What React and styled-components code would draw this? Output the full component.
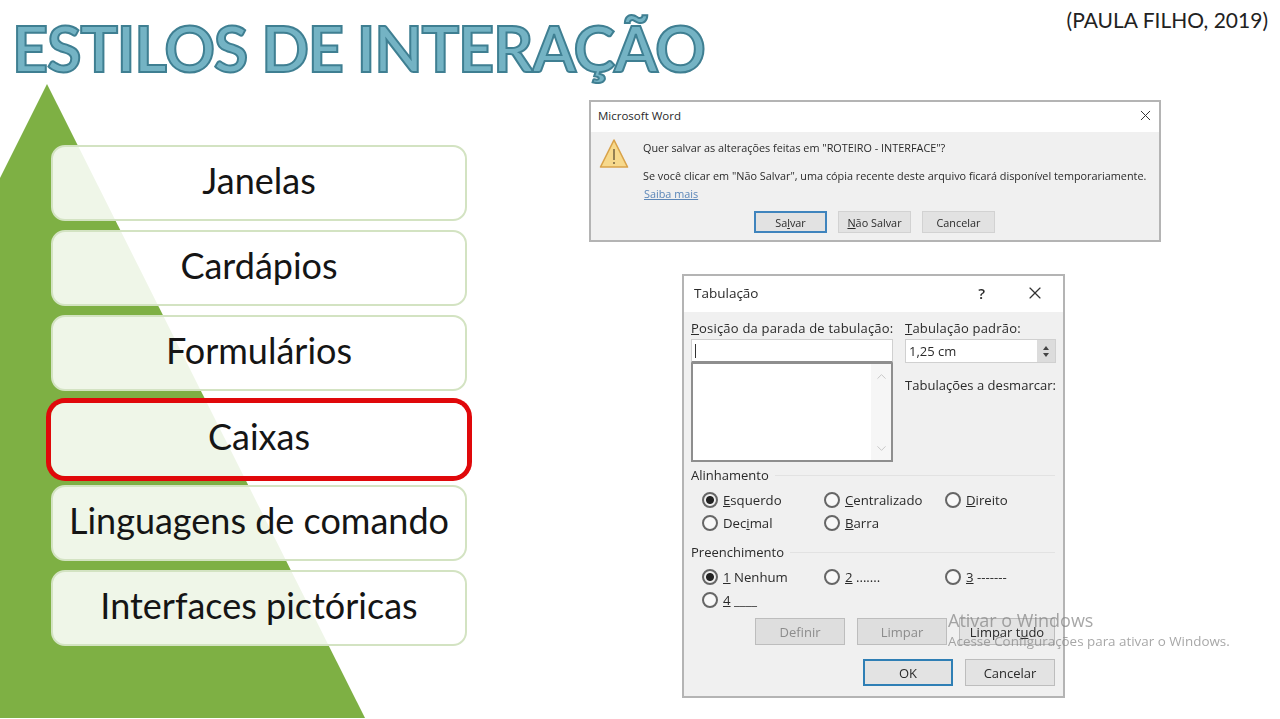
import React from 'react'
import styled, { createGlobalStyle } from 'styled-components'
import { X, ChevronUp, ChevronDown } from 'lucide-react'

const Global = createGlobalStyle`
    body {
        margin: 0;
        background: white;
        font-family: "Lato", "Liberation Sans", sans-serif;
    }
`

const topics = ['Janelas', 'Cardápios', 'Formulários', 'Caixas', 'Linguagens de comando', 'Interfaces pictóricas']

function Radio({ checked, children }) {
    return (
        <RadioItem>
            <RadioDot checked={checked} />
            <span>{children}</span>
        </RadioItem>
    )
}

function Warning() {
    return (
        <svg width="30" height="32" viewBox="0 0 30 32">
            <path d="M15 2 L28.5 29 L1.5 29 Z" fill="#f7d98c" stroke="#d9a24a" strokeWidth="1.6" strokeLinejoin="round" />
            <path d="M15 11 V22" stroke="#7b6a45" strokeWidth="1.6" />
            <path d="M15 24 V26" stroke="#7b6a45" strokeWidth="1.6" />
        </svg>
    )
}

function WordDialog() {
    return (
        <SaveDialog>
            <TitleBar>
                <SaveTitle>Microsoft Word</SaveTitle>
                <X size={17} strokeWidth={1.4} color="#333" />
            </TitleBar>
            <SaveBody>
                <WarningSlot><Warning /></WarningSlot>
                <SaveText>
                    <SaveLine>Quer salvar as alterações feitas em "ROTEIRO - INTERFACE"?</SaveLine>
                    <SaveLine spaced>Se você clicar em "Não Salvar", uma cópia recente deste arquivo ficará disponível temporariamente.</SaveLine>
                    <MoreLink>Saiba mais</MoreLink>
                </SaveText>
            </SaveBody>
            <SaveButtons>
                <SaveButton primary>Sa<u>l</u>var</SaveButton>
                <SaveButton><u>N</u>ão Salvar</SaveButton>
                <SaveButton>Cancelar</SaveButton>
            </SaveButtons>
        </SaveDialog>
    )
}

function TabsDialog() {
    return (
        <TabDialog>
            <TabTitleBar>
                <TabTitle>Tabulação</TabTitle>
                <HelpMark>?</HelpMark>
                <X size={20} strokeWidth={1.4} color="#333" />
            </TabTitleBar>
            <TabBody>
                <TopGrid>
                    <div>
                        <FieldLabel><u>P</u>osição da parada de tabulação:</FieldLabel>
                        <TabInput><Caret /></TabInput>
                        <TabList>
                            <ScrollTrack>
                                <ChevronUp size={15} strokeWidth={1.5} color="#c4c4c4" />
                                <ChevronDown size={15} strokeWidth={1.5} color="#c4c4c4" />
                            </ScrollTrack>
                        </TabList>
                    </div>
                    <div>
                        <FieldLabel><u>T</u>abulação padrão:</FieldLabel>
                        <Spinner>
                            <SpinnerValue>1,25 cm</SpinnerValue>
                            <SpinnerArrows>
                                <ArrowUp />
                                <ArrowDown />
                            </SpinnerArrows>
                        </Spinner>
                        <ClearLabel>Tabulações a desmarcar:</ClearLabel>
                    </div>
                </TopGrid>
                <GroupHead><span>Alinhamento</span><GroupLine /></GroupHead>
                <RadioGrid>
                    <Radio checked><u>E</u>squerdo</Radio>
                    <Radio><u>C</u>entralizado</Radio>
                    <Radio><u>D</u>ireito</Radio>
                    <Radio>Dec<u>i</u>mal</Radio>
                    <Radio><u>B</u>arra</Radio>
                </RadioGrid>
                <GroupHead second><span>Preenchimento</span><GroupLine /></GroupHead>
                <RadioGrid>
                    <Radio checked><u>1</u> Nenhum</Radio>
                    <Radio><u>2</u> .......</Radio>
                    <Radio><u>3</u> -------</Radio>
                    <Radio><u>4</u> ____</Radio>
                </RadioGrid>
                <ActionRow>
                    <TabButton disabled>Definir</TabButton>
                    <TabButton disabled>Limpar</TabButton>
                    <TabButton wide>Limpar t<u>u</u>do</TabButton>
                </ActionRow>
                <ConfirmRow>
                    <TabButton primary>OK</TabButton>
                    <TabButton>Cancelar</TabButton>
                </ConfirmRow>
            </TabBody>
        </TabDialog>
    )
}

function App() {
    return (
        <Slide>
            <Global />
            <Pyramid viewBox="0 0 366 634" width="366" height="634">
                <path d="M47 0 L365 634 L0 634 L0 94 Z" fill="#7eb044" />
            </Pyramid>
            <Header>
                <Title>ESTILOS DE INTERAÇÃO</Title>
                <Citation>(PAULA FILHO, 2019)</Citation>
            </Header>
            <Main>
                <TopicColumn>
                    {topics.map((topic) => (
                        <Topic key={topic} active={topic === 'Caixas'}>{topic}</Topic>
                    ))}
                </TopicColumn>
                <DialogColumn>
                    <WordDialog />
                    <TabsDialog />
                </DialogColumn>
            </Main>
            <Watermark>
                <WatermarkTitle>Ativar o Windows</WatermarkTitle>
                <WatermarkText>Acesse Configurações para ativar o Windows.</WatermarkText>
            </Watermark>
        </Slide>
    )
}

export default App

const Slide = styled.div`
    position: relative;
    width: 1280px;
    height: 719px;
    overflow: hidden;
    background: white;
`
const Pyramid = styled.svg`
    position: absolute;
    left: 0;
    top: 84px;
`
const Header = styled.header`
    position: relative;
    height: 84px;
    display: flex;
    justify-content: space-between;
    align-items: flex-start;
    padding: 0 12px 0 12px;
`
const Title = styled.h1`
    margin: 6px 0 0;
    font-family: "Lato", sans-serif;
    font-weight: 700;
    font-size: 63px;
    line-height: 84px;
    letter-spacing: -1.25px;
    color: #74b3c4;
    -webkit-text-stroke: 2px #3f7f92;
    filter: blur(0.4px);
    white-space: nowrap;
`
const Citation = styled.div`
    margin-top: 7px;
    font-size: 21px;
    line-height: 26px;
    color: #222;
`
const Main = styled.main`
    position: relative;
    display: flex;
    align-items: flex-start;
`
const TopicColumn = styled.div`
    width: 416px;
    margin: 61px 0 0 51px;
    display: flex;
    flex-direction: column;
    gap: 9px;
`
const Topic = styled.div`
    position: relative;
    box-sizing: border-box;
    height: 76px;
    padding-bottom: 7px;
    display: flex;
    align-items: center;
    justify-content: center;
    font-size: 36px;
    color: #151515;
    white-space: nowrap;
    background: rgba(255, 255, 255, 0.88);
    border: 2px solid #d3e3c2;
    border-radius: 14px;
    ${(props) => props.active && `
        height: 73px;
        margin-top: 3px;
        padding-bottom: 7px;
        border-color: transparent;
        box-shadow: 0 0 0 5px #e0080a;
    `}
`
const DialogColumn = styled.div`
    margin: 16px 0 0 122px;
    display: flex;
    flex-direction: column;
    align-items: flex-start;
    font-family: "Open Sans", "Liberation Sans", sans-serif;
    color: #2a2a2a;
    filter: blur(0.45px);
`
const SaveDialog = styled.section`
    box-sizing: border-box;
    width: 572px;
    height: 142px;
    border: 2px solid #b4b4b4;
    background: #f0f0f0;
    display: flex;
    flex-direction: column;
`
const TitleBar = styled.div`
    box-sizing: border-box;
    height: 30px;
    flex: none;
    background: white;
    display: flex;
    align-items: center;
    justify-content: space-between;
    padding: 0 5px 3px 7px;
`
const SaveTitle = styled.span`
    font-size: 11.5px;
`
const SaveBody = styled.div`
    display: flex;
    padding: 6px 0 0 8px;
`
const WarningSlot = styled.div`
    width: 44px;
    height: 32px;
    flex: none;
`
const SaveText = styled.div`
    display: flex;
    flex-direction: column;
    padding-top: 3px;
`
const SaveLine = styled.div`
    font-size: 10.85px;
    line-height: 14px;
    white-space: nowrap;
    margin-top: ${(props) => (props.spaced ? '14px' : '0')};
`
const MoreLink = styled.a`
    margin: 3px 0 0 1px;
    font-size: 10.85px;
    line-height: 16px;
    color: #5b86b8;
    text-decoration: underline;
`
const SaveButtons = styled.div`
    margin: 9px 0 0 163px;
    display: flex;
    gap: 11px;
`
const SaveButton = styled.button`
    box-sizing: border-box;
    width: 73px;
    height: 22px;
    padding: 0;
    font-family: inherit;
    font-size: 10.85px;
    color: #2a2a2a;
    background: #e2e2e2;
    border: ${(props) => (props.primary ? '2px solid #3f84bd' : '1px solid #d2d2d2')};
`
const TabDialog = styled.section`
    box-sizing: border-box;
    width: 383px;
    height: 424px;
    margin: 32px 0 0 93px;
    border: 2px solid #b4b4b4;
    background: #f0f0f0;
`
const TabTitleBar = styled.div`
    box-sizing: border-box;
    height: 36px;
    background: white;
    display: flex;
    align-items: center;
    padding: 0 18px 3px 10px;
`
const TabTitle = styled.span`
    flex: 1;
    font-size: 13.5px;
`
const HelpMark = styled.span`
    margin-right: 40px;
    font-size: 15px;
    font-weight: 600;
`
const TabBody = styled.div`
    padding: 8px 8px 0 7px;
`
const TopGrid = styled.div`
    display: grid;
    grid-template-columns: 202px 1fr;
    column-gap: 12px;
    font-size: 13px;
`
const FieldLabel = styled.div`
    line-height: 16px;
    height: 19px;
    letter-spacing: 0.2px;
    white-space: nowrap;
`
const TabInput = styled.div`
    box-sizing: border-box;
    height: 24px;
    background: white;
    border: 1px solid #d0d0d0;
    border-bottom: 2px solid #8e8e8e;
    padding: 4px 3px;
`
const Caret = styled.div`
    width: 1px;
    height: 14px;
    background: #333;
`
const TabList = styled.div`
    box-sizing: border-box;
    height: 99px;
    background: white;
    border: 2px solid #8e8e8e;
    border-top-width: 1px;
    display: flex;
    justify-content: flex-end;
`
const ScrollTrack = styled.div`
    width: 20px;
    padding: 5px 0 4px;
    background: #f6f6f6;
    display: flex;
    flex-direction: column;
    justify-content: space-between;
    align-items: center;
`
const Spinner = styled.div`
    box-sizing: border-box;
    width: 151px;
    height: 24px;
    display: flex;
    background: white;
    border: 1px solid #d0d0d0;
`
const SpinnerValue = styled.div`
    flex: 1;
    padding-left: 3px;
    line-height: 22px;
`
const SpinnerArrows = styled.div`
    width: 18px;
    background: #dcdcdc;
    display: flex;
    flex-direction: column;
    align-items: center;
    justify-content: center;
    gap: 3px;
`
const ArrowUp = styled.div`
    border: 3.5px solid transparent;
    border-top-width: 0;
    border-bottom: 4px solid #444;
`
const ArrowDown = styled.div`
    border: 3.5px solid transparent;
    border-bottom-width: 0;
    border-top: 4px solid #444;
`
const ClearLabel = styled.div`
    margin-top: 14px;
    line-height: 16px;
    letter-spacing: 0.02px;
    white-space: nowrap;
`
const GroupHead = styled.div`
    margin-top: ${(props) => (props.second ? '10px' : '5px')};
    display: flex;
    align-items: center;
    gap: 6px;
    font-size: 13px;
    line-height: 16px;
`
const GroupLine = styled.div`
    flex: 1;
    height: 1px;
    background: #e2e2e2;
`
const RadioGrid = styled.div`
    margin: 5px 0 0 11px;
    display: grid;
    grid-template-columns: 122px 121px 1fr;
    grid-auto-rows: 23px;
    font-size: 13.2px;
`
const RadioItem = styled.div`
    display: flex;
    align-items: center;
    gap: 5px;
    white-space: nowrap;
`
const RadioDot = styled.span`
    box-sizing: border-box;
    width: 16px;
    height: 16px;
    flex: none;
    border-radius: 50%;
    border: 2px solid #666;
    background: ${(props) => (props.checked ? 'radial-gradient(circle, #222 0 3.5px, #f0f0f0 4.5px)' : '#f8f8f8')};
`
const ActionRow = styled.div`
    margin-top: 7px;
    padding-left: 64px;
    display: flex;
    gap: 12px;
`
const ConfirmRow = styled.div`
    margin-top: 14px;
    padding-left: 172px;
    display: flex;
    gap: 12px;
`
const TabButton = styled.button`
    box-sizing: border-box;
    width: ${(props) => (props.wide ? '96px' : '90px')};
    height: 27px;
    padding: 0;
    font-family: inherit;
    font-size: 13px;
    color: #2a2a2a;
    background: #e3e3e3;
    border: ${(props) => (props.primary ? '2px solid #2f7fb5' : '1px solid #bdbdbd')};
    &:disabled {
        color: #8c8c8c;
        background: #dedede;
    }
`
const Watermark = styled.div`
    position: absolute;
    left: 948px;
    top: 610px;
    color: rgba(130, 130, 130, 0.7);
    font-family: "Open Sans", sans-serif;
    white-space: nowrap;
`
const WatermarkTitle = styled.div`
    font-size: 18px;
    line-height: 20px;
`
const WatermarkText = styled.div`
    margin-top: 1px;
    font-size: 13.4px;
    line-height: 20px;
`
